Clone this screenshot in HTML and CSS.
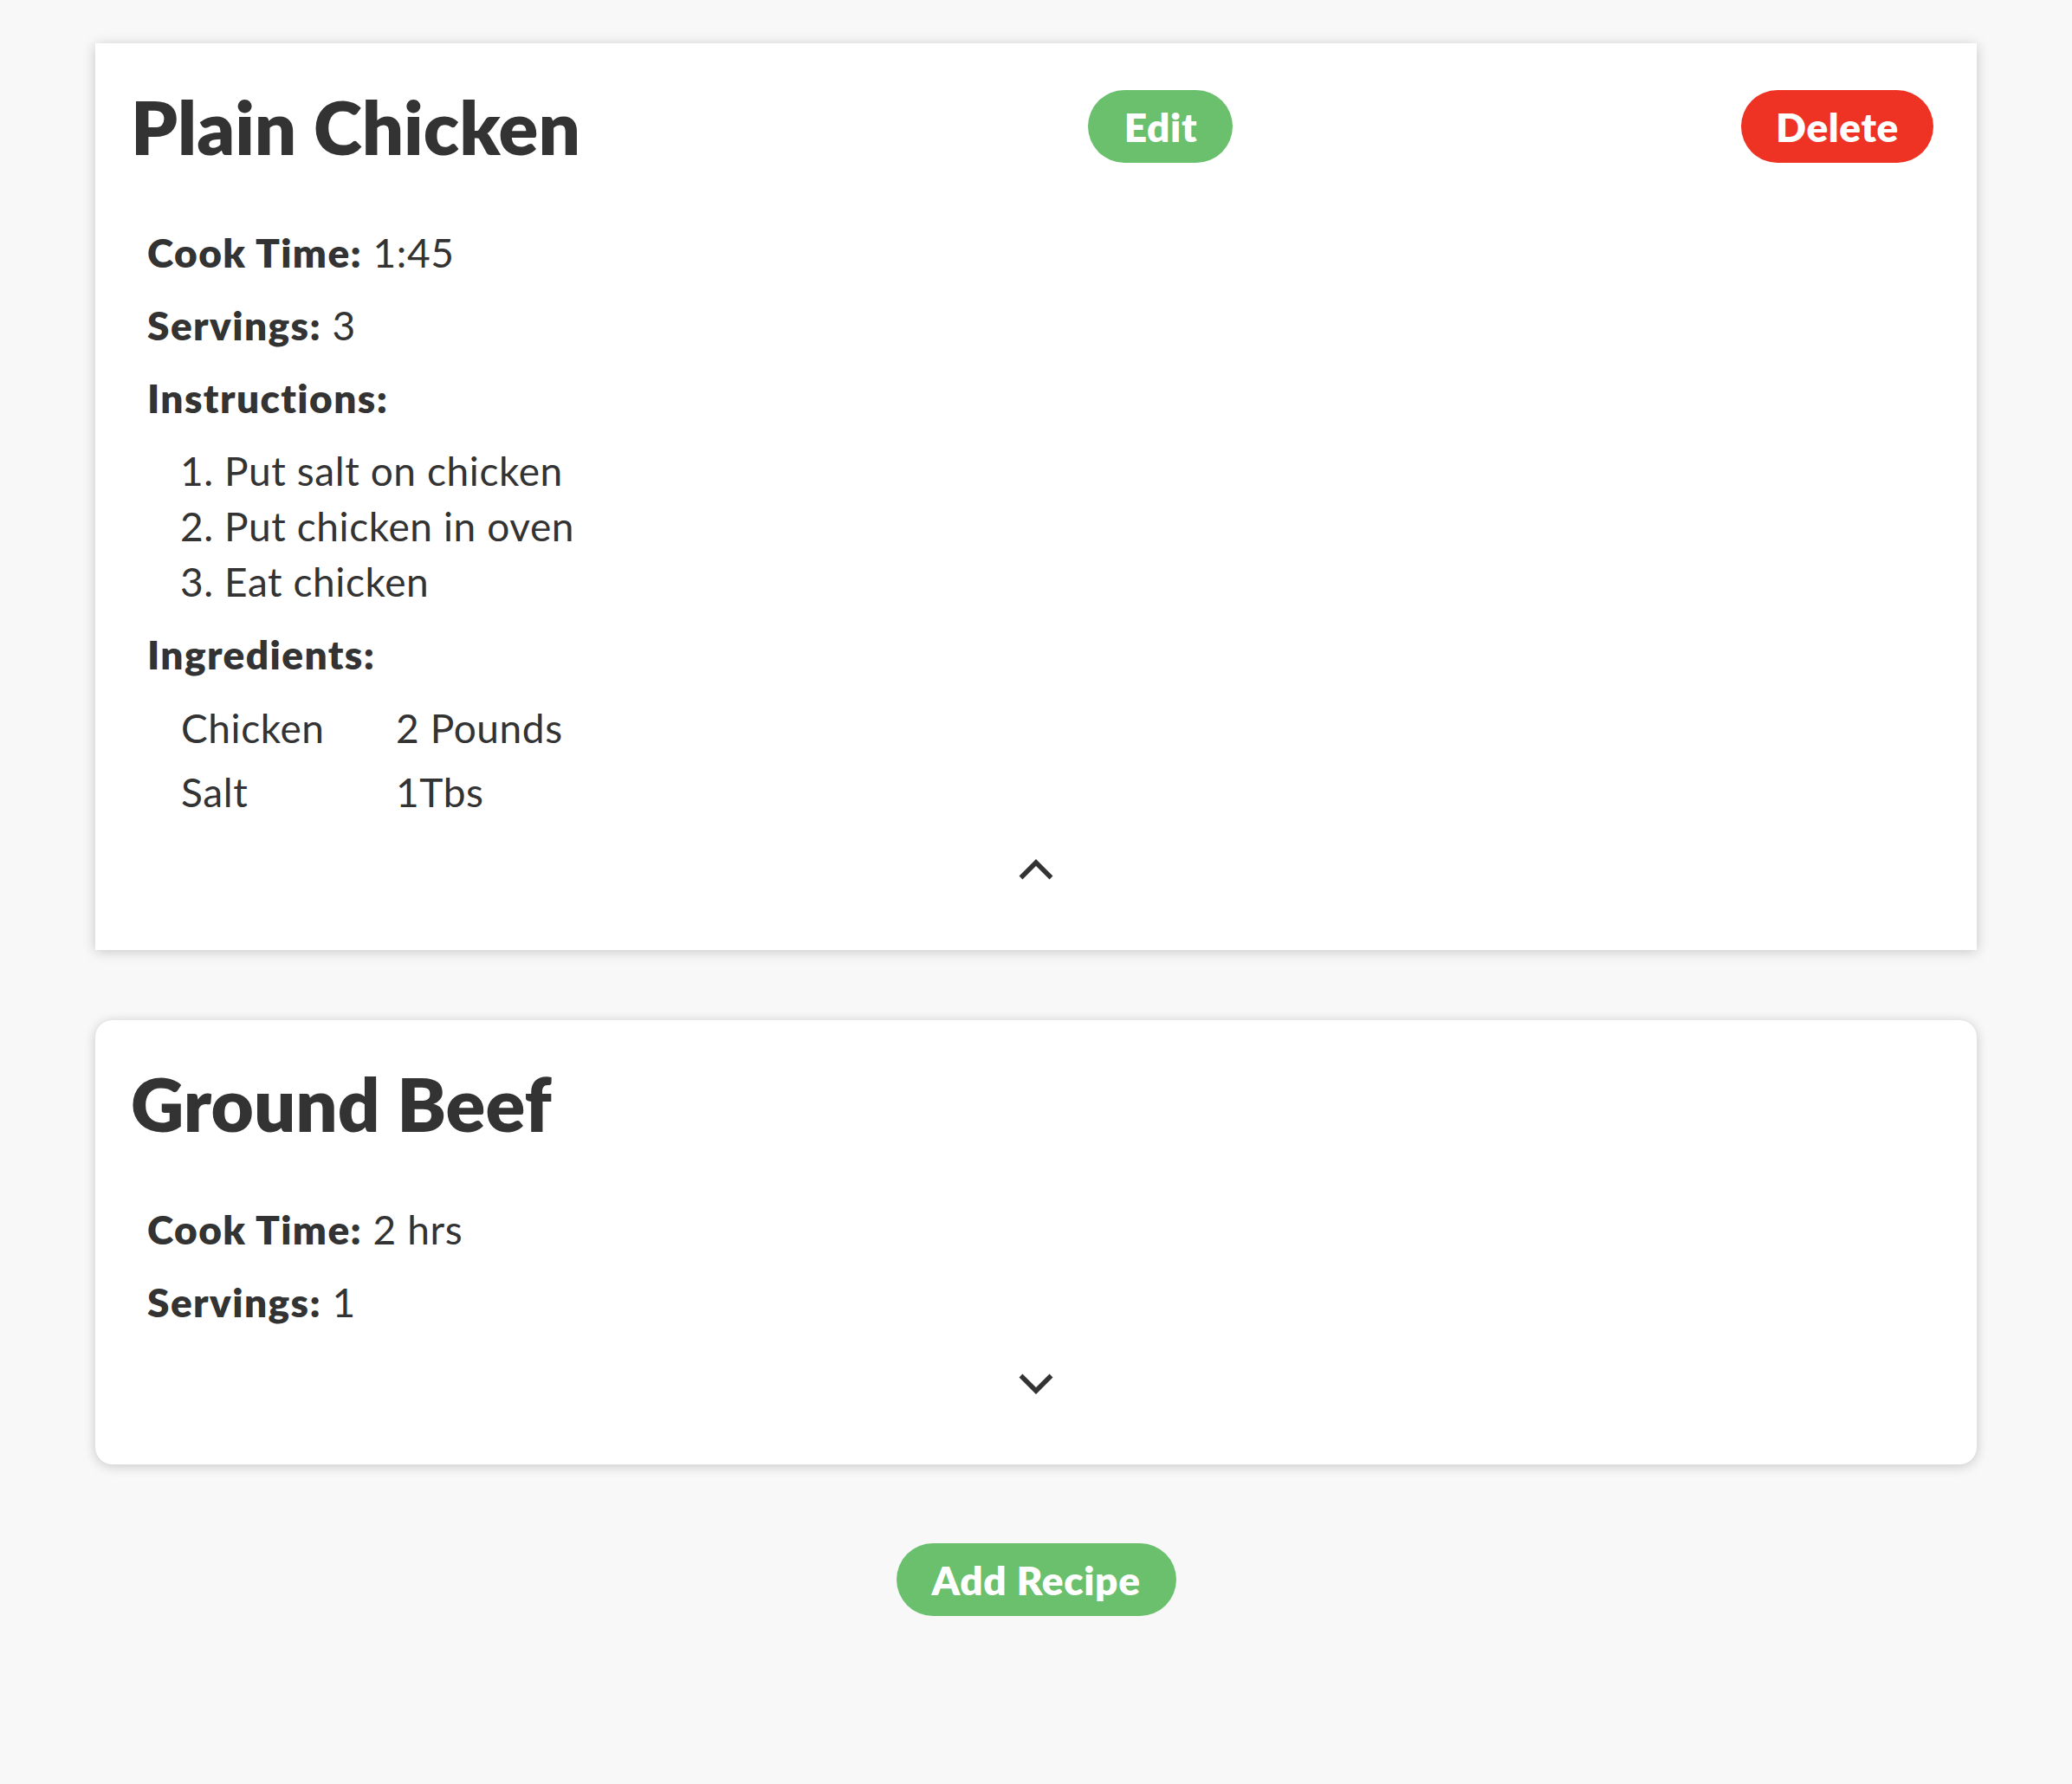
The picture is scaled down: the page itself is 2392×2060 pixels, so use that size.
FILE: index.html
```html
<!DOCTYPE html>
<html lang="en">
<head>
<meta charset="utf-8">
<title>Recipe Box</title>
<link rel="stylesheet" href="styles.css">
</head>
<body>
<main class="recipes">
  <section class="card card-open">
    <header class="card-head">
      <h2 class="card-title">Plain Chicken</h2>
      <button class="btn btn-green btn-edit">Edit</button>
      <button class="btn btn-red btn-delete">Delete</button>
    </header>
    <div class="details">
      <p class="line"><strong>Cook Time:</strong> 1:45</p>
      <p class="line"><strong>Servings:</strong> 3</p>
      <p class="line"><strong>Instructions:</strong></p>
      <ol class="steps">
        <li>Put salt on chicken</li>
        <li>Put chicken in oven</li>
        <li>Eat chicken</li>
      </ol>
      <p class="line"><strong>Ingredients:</strong></p>
      <div class="ingredients">
        <span>Chicken</span><span>2 Pounds</span>
        <span>Salt</span><span>1Tbs</span>
      </div>
    </div>
    <div class="toggle">
      <svg class="chevron" width="40" height="24" viewBox="0 0 40 24" aria-hidden="true">
        <polyline points="2.5,21.5 20,4 37.5,21.5" fill="none" stroke="#333" stroke-width="5.5" stroke-linejoin="miter"/>
      </svg>
    </div>
  </section>

  <section class="card card-closed">
    <header class="card-head">
      <h2 class="card-title">Ground Beef</h2>
    </header>
    <div class="details">
      <p class="line"><strong>Cook Time:</strong> 2 hrs</p>
      <p class="line"><strong>Servings:</strong> 1</p>
    </div>
    <div class="toggle">
      <svg class="chevron" width="40" height="24" viewBox="0 0 40 24" aria-hidden="true">
        <polyline points="2.5,2.5 20,20 37.5,2.5" fill="none" stroke="#333" stroke-width="5.5" stroke-linejoin="miter"/>
      </svg>
    </div>
  </section>

  <div class="actions">
    <button class="btn btn-green btn-add">Add Recipe</button>
  </div>
</main>
</body>
</html>
```
FILE: styles.css
```css
html, body {
  margin: 0;
  padding: 0;
  background: #f8f8f8;
}

body {
  font-family: "Lato", "Open Sans", sans-serif;
  font-size: 46px;
  color: #333333;
  letter-spacing: 0.6px;
}

.recipes {
  padding: 50px 110px 0;
  display: flex;
  flex-direction: column;
  gap: 81px;
}

.card {
  background: #ffffff;
  box-shadow: 0 2px 14px rgba(0, 0, 0, 0.2);
  padding: 54px 50px 81px 0;
}

.card-open {
  border-radius: 0;
}

.card-closed {
  border-radius: 20px;
}

.card-head {
  display: flex;
  justify-content: space-between;
  align-items: center;
  height: 84px;
  padding-left: 41px;
}

.card-title {
  margin: 0;
  font-size: 85px;
  font-weight: 800;
  line-height: 84px;
  letter-spacing: 0;
}

.btn {
  border: none;
  height: 84px;
  border-radius: 42px;
  color: #ffffff;
  font-family: "Lato", "Open Sans", sans-serif;
  font-size: 46px;
  font-weight: 800;
  letter-spacing: 0.6px;
  padding: 0;
  text-align: center;
  cursor: pointer;
}

.btn-green {
  background: #6ac06c;
}

.btn-red {
  background: #ee3224;
}

.btn-edit {
  width: 167px;
}

.btn-delete {
  width: 222px;
}

.btn-add {
  width: 323px;
}

.details {
  margin-top: 62px;
  padding-left: 60px;
}

.line {
  margin: 0;
  line-height: 84px;
}

.line strong {
  font-weight: 800;
  letter-spacing: 1.4px;
}

.steps {
  margin: 10px 0;
  padding-left: 89px;
  line-height: 64px;
}

.ingredients {
  display: grid;
  grid-template-columns: 248px auto;
  margin: 6px 0 0 39px;
  line-height: 74px;
}

.toggle {
  display: flex;
  justify-content: center;
  margin-top: 40px;
  height: 24px;
  padding-left: 50px;
}

.chevron {
  display: block;
}

.actions {
  display: flex;
  justify-content: center;
  margin-top: 10px;
}
```
